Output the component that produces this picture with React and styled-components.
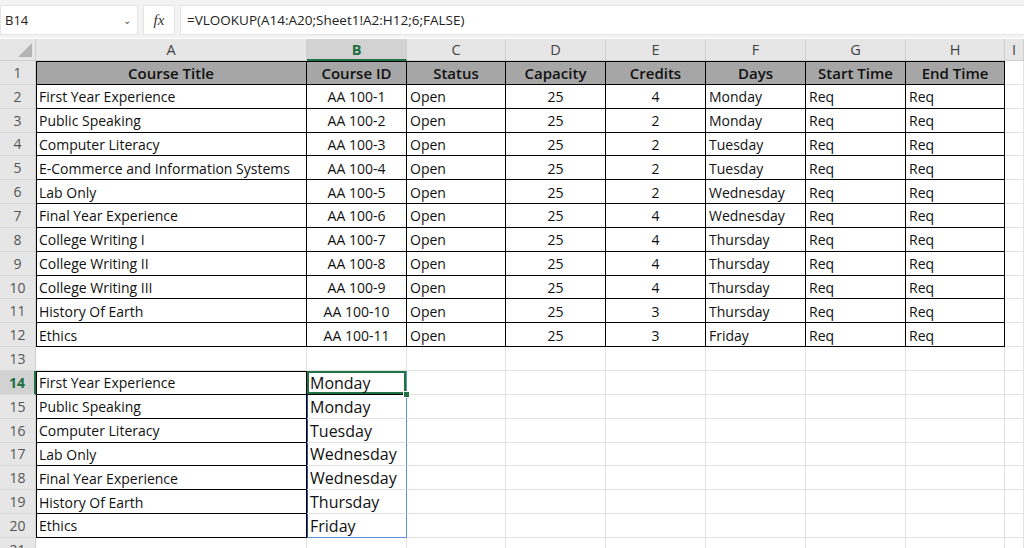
import React from "react";
import styled, { createGlobalStyle } from "styled-components";

const Global = createGlobalStyle`
  body { margin: 0; background: #fff; font-family: "Open Sans", "Noto Sans", sans-serif; overflow: hidden; }
`;

const Bar = styled.div`
  display: flex; align-items: center; gap: 5px; height: 38px; background: #f3f3f3;
  box-sizing: border-box; padding-top: 2px;
`;
const NameBox = styled.div`
  width: 138px; height: 30px; background: #fff; box-sizing: border-box; border: 1px solid #e3e3e3;
  display: flex; align-items: center; justify-content: space-between; padding: 0 6px 0 4px;
  font-size: 13px; color: #222;
`;
const FxBox = styled.div`
  width: 32px; height: 30px; background: #fff; border: 1px solid #e3e3e3; box-sizing: border-box;
  display: flex; align-items: center; justify-content: center;
  font-family: "Liberation Serif", serif; font-style: italic; font-size: 15px; color: #333;
`;
const Formula = styled.div`
  flex: 1; height: 30px; background: #fff; border: 1px solid #e3e3e3; border-right: none; box-sizing: border-box;
  display: flex; align-items: center; padding-left: 6px; font-size: 13.5px; color: #222;
`;

const Grid = styled.div`
  display: grid; margin-top: 1px;
  grid-template-columns: 36px 271px 100px 99px 100px 100px 100px 100px 99px 19px;
  grid-template-rows: 22px repeat(22, 23.85px);
`;
const Corner = styled.div`
  background: #e6e6e6; border-right: 1px solid #cfcfcf; border-bottom: 1px solid #cfcfcf; position: relative;
  &::after { content: ""; position: absolute; right: 3px; bottom: 3px; border-style: solid; border-width: 0 0 14px 14px; border-color: transparent transparent #b5b5b5 transparent; }
`;
const ColHead = styled.div`
  background: ${p => (p.$sel ? "#d2d2d2" : "#e6e6e6")}; color: ${p => (p.$sel ? "#1e6e42" : "#444")};
  font-weight: ${p => (p.$sel ? 700 : 400)}; font-size: 14.5px;
  border-right: 1px solid #cfcfcf; border-bottom: ${p => (p.$sel ? "2px solid #217346" : "1px solid #cfcfcf")};
  display: flex; align-items: center; justify-content: center; box-sizing: border-box;
`;
const RowHead = styled.div`
  background: ${p => (p.$sel ? "#d2d2d2" : "#e6e6e6")}; color: ${p => (p.$sel ? "#1e6e42" : "#555")};
  font-weight: ${p => (p.$sel ? 700 : 400)}; font-size: 14px;
  border-bottom: 1px solid #d8d8d8; border-right: ${p => (p.$sel ? "2px solid #217346" : "1px solid #cfcfcf")};
  display: flex; align-items: center; justify-content: center; box-sizing: border-box;
`;
const Cell = styled.div`
  box-sizing: border-box; font-size: ${p => (p.$big ? "16px" : "14px")}; color: #111;
  font-weight: ${p => (p.$bold ? 600 : 400)};
  background: ${p => (p.$fill ? "#a6a6a6" : "#fff")};
  border-right: 1px solid ${p => (p.$rangeC ? "#5b8fd8" : p.$boxR ? "#000" : "#e1e1e1")};
  border-bottom: 1px solid ${p => (p.$rangeEnd ? "#5b8fd8" : p.$boxB ? "#000" : "#e1e1e1")};
  box-shadow: ${p =>
    p.$active
      ? "inset 0 0 0 2px #217346"
      : [p.$left && "inset 1px 0 0 #000", p.$top && "inset 0 1px 0 #000", p.$rangeC && "inset 1px 0 0 #1f4fa0"].filter(Boolean).join(",") || "none"};
  display: flex; align-items: center; justify-content: ${p => (p.$center ? "center" : "flex-start")};
  padding: 1px 3px 0; white-space: nowrap; overflow: ${p => (p.$active ? "visible" : "hidden")};
  position: relative;
`;
const Handle = styled.span`
  position: absolute; right: -4px; bottom: -4px; width: 5px; height: 5px; background: #217346; border: 1px solid #fff; z-index: 2;
`;

const cols = ["A", "B", "C", "D", "E", "F", "G", "H", "I"];
const heads = ["Course Title", "Course ID", "Status", "Capacity", "Credits", "Days", "Start Time", "End Time"];
const data = [
  ["First Year Experience", "AA 100-1", 4, "Monday"],
  ["Public Speaking", "AA 100-2", 2, "Monday"],
  ["Computer Literacy", "AA 100-3", 2, "Tuesday"],
  ["E-Commerce and Information Systems", "AA 100-4", 2, "Tuesday"],
  ["Lab Only", "AA 100-5", 2, "Wednesday"],
  ["Final Year Experience", "AA 100-6", 4, "Wednesday"],
  ["College Writing I", "AA 100-7", 4, "Thursday"],
  ["College Writing II", "AA 100-8", 4, "Thursday"],
  ["College Writing III", "AA 100-9", 4, "Thursday"],
  ["History Of Earth", "AA 100-10", 3, "Thursday"],
  ["Ethics", "AA 100-11", 3, "Friday"],
];
const lookup = [
  ["First Year Experience", "Monday"], ["Public Speaking", "Monday"], ["Computer Literacy", "Tuesday"],
  ["Lab Only", "Wednesday"], ["Final Year Experience", "Wednesday"], ["History Of Earth", "Thursday"], ["Ethics", "Friday"],
];

function rowCells(r) {
  const out = [];
  for (let c = 0; c < 9; c++) {
    const k = `${r}-${c}`;
    if (r === 1 && c < 8) {
      out.push(<Cell key={k} $fill $bold $center $boxR $boxB $top $left={c === 0} style={{ fontSize: 15 }}>{heads[c]}</Cell>);
    } else if (r >= 2 && r <= 12 && c < 8) {
      const d = data[r - 2];
      const vals = [d[0], d[1], "Open", 25, d[2], d[3], "Req", "Req"];
      out.push(<Cell key={k} $boxR $boxB $left={c === 0} $center={[1, 3, 4].includes(c)}>{vals[c]}</Cell>);
    } else if (r >= 14 && r <= 20 && c === 0) {
      out.push(<Cell key={k} $boxR $boxB $left $top={r === 14}>{lookup[r - 14][0]}</Cell>);
    } else if (r >= 14 && r <= 20 && c === 1) {
      out.push(
        <Cell key={k} $big $rangeC $active={r === 14} $rangeEnd={r === 20} $boxB={r === 14}>
          {lookup[r - 14][1]}
          {r === 14 && <Handle />}
        </Cell>
      );
    } else {
      out.push(<Cell key={k} />);
    }
  }
  return out;
}

export default function App() {
  const rows = [];
  for (let r = 1; r <= 22; r++) {
    rows.push(<RowHead key={"h" + r} $sel={r === 14}>{r}</RowHead>);
    rows.push(...rowCells(r));
  }
  return (
    <>
      <Global />
      <Bar>
        <NameBox><span>B14</span><span style={{ fontSize: 10, color: "#555" }}>⌄</span></NameBox>
        <FxBox>fx</FxBox>
        <Formula>=VLOOKUP(A14:A20;Sheet1!A2:H12;6;FALSE)</Formula>
      </Bar>
      <Grid>
        <Corner />
        {cols.map(c => <ColHead key={c} $sel={c === "B"}>{c}</ColHead>)}
        {rows}
      </Grid>
    </>
  );
}
